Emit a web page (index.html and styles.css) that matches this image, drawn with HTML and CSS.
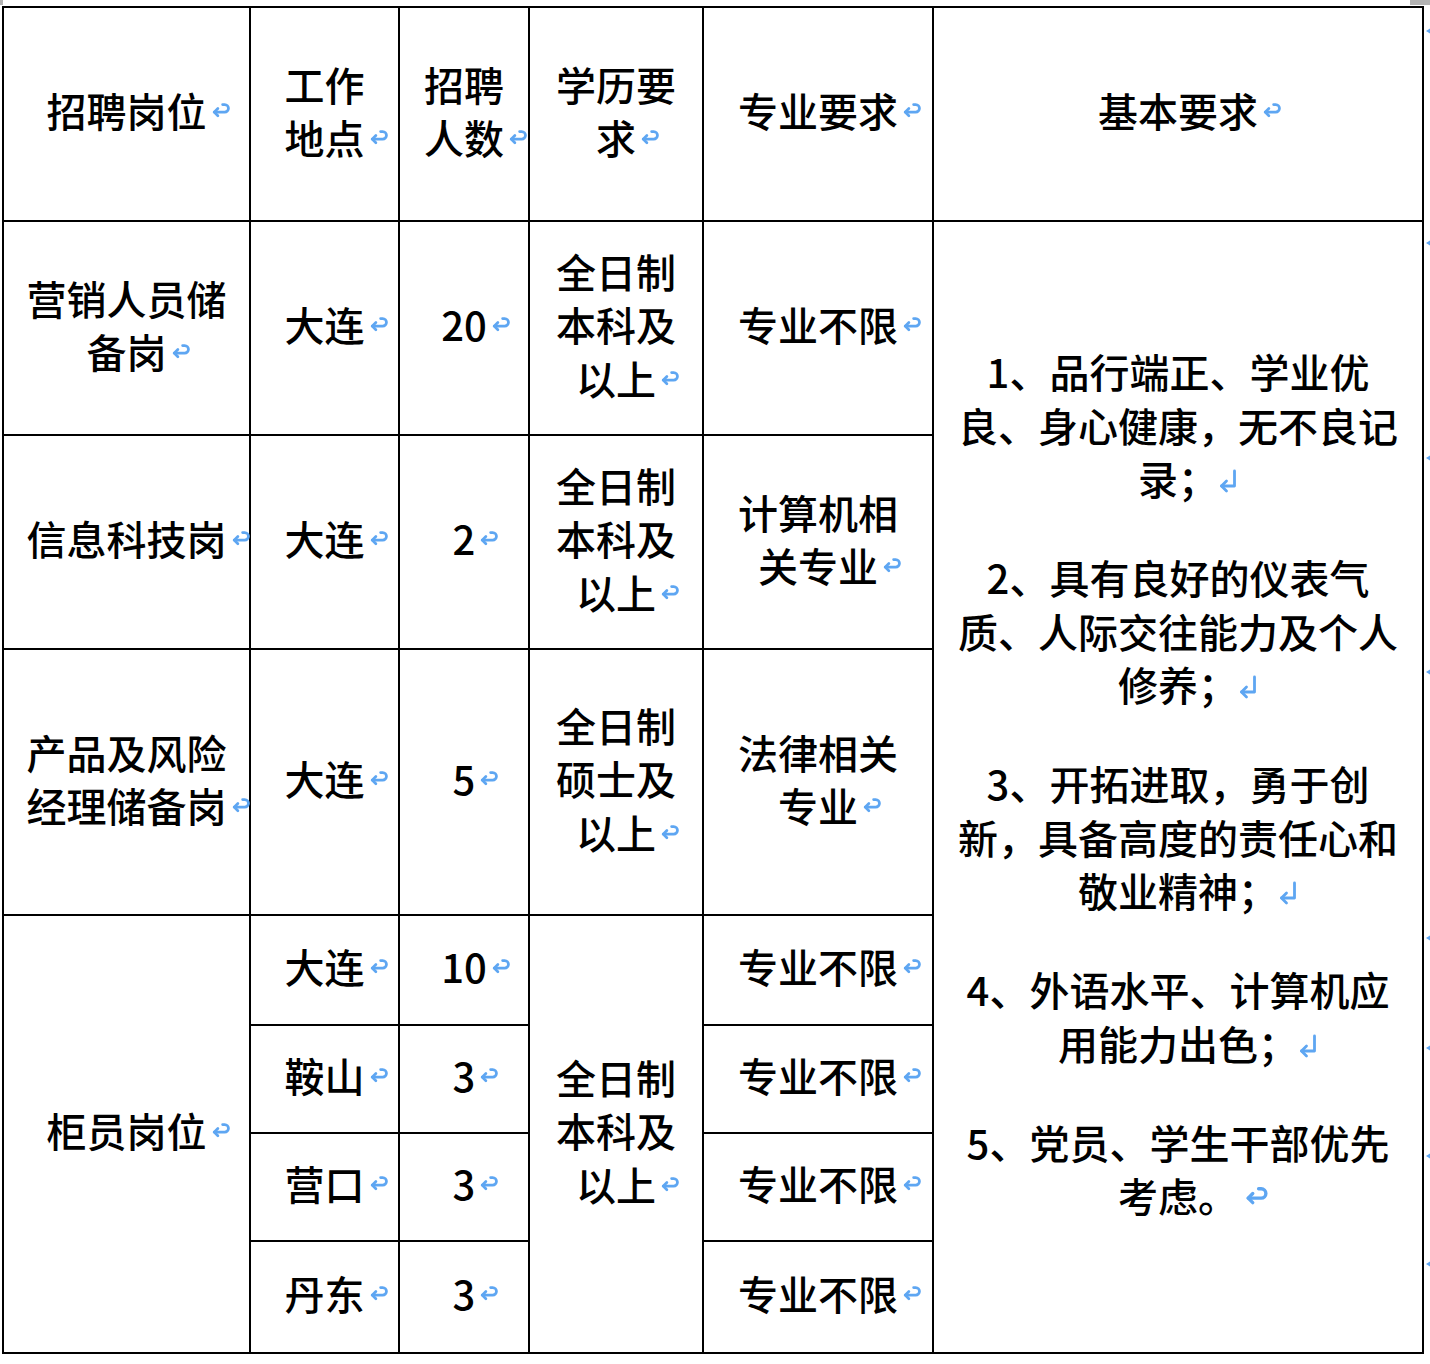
FILE: index.html
```html
<!DOCTYPE html>
<html lang="zh-CN">
<head>
<meta charset="utf-8">
<title>招聘岗位</title>
<link rel="stylesheet" href="styles.css">
</head>
<body>
<div class="page">
  <span class="corner corner-left"></span>
  <span class="corner corner-right"></span>

  <table class="jobs">
    <colgroup>
      <col class="c1"><col class="c2"><col class="c3"><col class="c4"><col class="c5"><col class="c6">
    </colgroup>
    <tr class="r-head">
      <td>招聘岗位<span class="pm"><svg class="ret" viewBox="0 0 20 13"><path d="M4 8.5H14a3.6 3.6 0 0 0 0-7.2h-2"/><path d="M7.5 5L4 8.5 7.5 12"/></svg></span></td>
      <td>工作地点<span class="pm"><svg class="ret" viewBox="0 0 20 13"><path d="M4 8.5H14a3.6 3.6 0 0 0 0-7.2h-2"/><path d="M7.5 5L4 8.5 7.5 12"/></svg></span></td>
      <td>招聘人数<span class="pm"><svg class="ret" viewBox="0 0 20 13"><path d="M4 8.5H14a3.6 3.6 0 0 0 0-7.2h-2"/><path d="M7.5 5L4 8.5 7.5 12"/></svg></span></td>
      <td>学历要求<span class="pm"><svg class="ret" viewBox="0 0 20 13"><path d="M4 8.5H14a3.6 3.6 0 0 0 0-7.2h-2"/><path d="M7.5 5L4 8.5 7.5 12"/></svg></span></td>
      <td>专业要求<span class="pm"><svg class="ret" viewBox="0 0 20 13"><path d="M4 8.5H14a3.6 3.6 0 0 0 0-7.2h-2"/><path d="M7.5 5L4 8.5 7.5 12"/></svg></span></td>
      <td>基本要求<span class="pm"><svg class="ret" viewBox="0 0 20 13"><path d="M4 8.5H14a3.6 3.6 0 0 0 0-7.2h-2"/><path d="M7.5 5L4 8.5 7.5 12"/></svg></span></td>
    </tr>
    <tr class="r-a">
      <td>营销人员储备岗<span class="pm"><svg class="ret" viewBox="0 0 20 13"><path d="M4 8.5H14a3.6 3.6 0 0 0 0-7.2h-2"/><path d="M7.5 5L4 8.5 7.5 12"/></svg></span></td>
      <td>大连<span class="pm"><svg class="ret" viewBox="0 0 20 13"><path d="M4 8.5H14a3.6 3.6 0 0 0 0-7.2h-2"/><path d="M7.5 5L4 8.5 7.5 12"/></svg></span></td>
      <td>20<span class="pm"><svg class="ret" viewBox="0 0 20 13"><path d="M4 8.5H14a3.6 3.6 0 0 0 0-7.2h-2"/><path d="M7.5 5L4 8.5 7.5 12"/></svg></span></td>
      <td>全日制本科及以上<span class="pm"><svg class="ret" viewBox="0 0 20 13"><path d="M4 8.5H14a3.6 3.6 0 0 0 0-7.2h-2"/><path d="M7.5 5L4 8.5 7.5 12"/></svg></span></td>
      <td>专业不限<span class="pm"><svg class="ret" viewBox="0 0 20 13"><path d="M4 8.5H14a3.6 3.6 0 0 0 0-7.2h-2"/><path d="M7.5 5L4 8.5 7.5 12"/></svg></span></td>
      <td rowspan="7" class="basic">
        <p>1、品行端正、学业优良、身心健康，无不良记录；<span class="pm"><svg class="nl" viewBox="0 0 20 24"><path d="M16.5 2V17H3.5"/><path d="M8.5 12L3.5 17 8.5 22"/></svg></span></p>
        <p>2、具有良好的仪表气质、人际交往能力及个人修养；<span class="pm"><svg class="nl" viewBox="0 0 20 24"><path d="M16.5 2V17H3.5"/><path d="M8.5 12L3.5 17 8.5 22"/></svg></span></p>
        <p>3、开拓进取，勇于创新，具备高度的责任心和敬业精神；<span class="pm"><svg class="nl" viewBox="0 0 20 24"><path d="M16.5 2V17H3.5"/><path d="M8.5 12L3.5 17 8.5 22"/></svg></span></p>
        <p>4、外语水平、计算机应用能力出色；<span class="pm"><svg class="nl" viewBox="0 0 20 24"><path d="M16.5 2V17H3.5"/><path d="M8.5 12L3.5 17 8.5 22"/></svg></span></p>
        <p>5、党员、学生干部优先考虑。<span class="pm"><svg class="ret ret-lg" viewBox="0 0 20 13"><path d="M4 8.5H14a3.6 3.6 0 0 0 0-7.2h-2"/><path d="M7.5 5L4 8.5 7.5 12"/></svg></span></p>
      </td>
    </tr>
    <tr class="r-b">
      <td>信息科技岗<span class="pm"><svg class="ret" viewBox="0 0 20 13"><path d="M4 8.5H14a3.6 3.6 0 0 0 0-7.2h-2"/><path d="M7.5 5L4 8.5 7.5 12"/></svg></span></td>
      <td>大连<span class="pm"><svg class="ret" viewBox="0 0 20 13"><path d="M4 8.5H14a3.6 3.6 0 0 0 0-7.2h-2"/><path d="M7.5 5L4 8.5 7.5 12"/></svg></span></td>
      <td>2<span class="pm"><svg class="ret" viewBox="0 0 20 13"><path d="M4 8.5H14a3.6 3.6 0 0 0 0-7.2h-2"/><path d="M7.5 5L4 8.5 7.5 12"/></svg></span></td>
      <td>全日制本科及以上<span class="pm"><svg class="ret" viewBox="0 0 20 13"><path d="M4 8.5H14a3.6 3.6 0 0 0 0-7.2h-2"/><path d="M7.5 5L4 8.5 7.5 12"/></svg></span></td>
      <td>计算机相关专业<span class="pm"><svg class="ret" viewBox="0 0 20 13"><path d="M4 8.5H14a3.6 3.6 0 0 0 0-7.2h-2"/><path d="M7.5 5L4 8.5 7.5 12"/></svg></span></td>
    </tr>
    <tr class="r-c">
      <td>产品及风险经理储备岗<span class="pm"><svg class="ret" viewBox="0 0 20 13"><path d="M4 8.5H14a3.6 3.6 0 0 0 0-7.2h-2"/><path d="M7.5 5L4 8.5 7.5 12"/></svg></span></td>
      <td>大连<span class="pm"><svg class="ret" viewBox="0 0 20 13"><path d="M4 8.5H14a3.6 3.6 0 0 0 0-7.2h-2"/><path d="M7.5 5L4 8.5 7.5 12"/></svg></span></td>
      <td>5<span class="pm"><svg class="ret" viewBox="0 0 20 13"><path d="M4 8.5H14a3.6 3.6 0 0 0 0-7.2h-2"/><path d="M7.5 5L4 8.5 7.5 12"/></svg></span></td>
      <td>全日制硕士及以上<span class="pm"><svg class="ret" viewBox="0 0 20 13"><path d="M4 8.5H14a3.6 3.6 0 0 0 0-7.2h-2"/><path d="M7.5 5L4 8.5 7.5 12"/></svg></span></td>
      <td>法律相关专业<span class="pm"><svg class="ret" viewBox="0 0 20 13"><path d="M4 8.5H14a3.6 3.6 0 0 0 0-7.2h-2"/><path d="M7.5 5L4 8.5 7.5 12"/></svg></span></td>
    </tr>
    <tr class="r-d">
      <td rowspan="4">柜员岗位<span class="pm"><svg class="ret" viewBox="0 0 20 13"><path d="M4 8.5H14a3.6 3.6 0 0 0 0-7.2h-2"/><path d="M7.5 5L4 8.5 7.5 12"/></svg></span></td>
      <td>大连<span class="pm"><svg class="ret" viewBox="0 0 20 13"><path d="M4 8.5H14a3.6 3.6 0 0 0 0-7.2h-2"/><path d="M7.5 5L4 8.5 7.5 12"/></svg></span></td>
      <td>10<span class="pm"><svg class="ret" viewBox="0 0 20 13"><path d="M4 8.5H14a3.6 3.6 0 0 0 0-7.2h-2"/><path d="M7.5 5L4 8.5 7.5 12"/></svg></span></td>
      <td rowspan="4">全日制本科及以上<span class="pm"><svg class="ret" viewBox="0 0 20 13"><path d="M4 8.5H14a3.6 3.6 0 0 0 0-7.2h-2"/><path d="M7.5 5L4 8.5 7.5 12"/></svg></span></td>
      <td>专业不限<span class="pm"><svg class="ret" viewBox="0 0 20 13"><path d="M4 8.5H14a3.6 3.6 0 0 0 0-7.2h-2"/><path d="M7.5 5L4 8.5 7.5 12"/></svg></span></td>
    </tr>
    <tr class="r-e">
      <td>鞍山<span class="pm"><svg class="ret" viewBox="0 0 20 13"><path d="M4 8.5H14a3.6 3.6 0 0 0 0-7.2h-2"/><path d="M7.5 5L4 8.5 7.5 12"/></svg></span></td>
      <td>3<span class="pm"><svg class="ret" viewBox="0 0 20 13"><path d="M4 8.5H14a3.6 3.6 0 0 0 0-7.2h-2"/><path d="M7.5 5L4 8.5 7.5 12"/></svg></span></td>
      <td>专业不限<span class="pm"><svg class="ret" viewBox="0 0 20 13"><path d="M4 8.5H14a3.6 3.6 0 0 0 0-7.2h-2"/><path d="M7.5 5L4 8.5 7.5 12"/></svg></span></td>
    </tr>
    <tr class="r-f">
      <td>营口<span class="pm"><svg class="ret" viewBox="0 0 20 13"><path d="M4 8.5H14a3.6 3.6 0 0 0 0-7.2h-2"/><path d="M7.5 5L4 8.5 7.5 12"/></svg></span></td>
      <td>3<span class="pm"><svg class="ret" viewBox="0 0 20 13"><path d="M4 8.5H14a3.6 3.6 0 0 0 0-7.2h-2"/><path d="M7.5 5L4 8.5 7.5 12"/></svg></span></td>
      <td>专业不限<span class="pm"><svg class="ret" viewBox="0 0 20 13"><path d="M4 8.5H14a3.6 3.6 0 0 0 0-7.2h-2"/><path d="M7.5 5L4 8.5 7.5 12"/></svg></span></td>
    </tr>
    <tr class="r-g">
      <td>丹东<span class="pm"><svg class="ret" viewBox="0 0 20 13"><path d="M4 8.5H14a3.6 3.6 0 0 0 0-7.2h-2"/><path d="M7.5 5L4 8.5 7.5 12"/></svg></span></td>
      <td>3<span class="pm"><svg class="ret" viewBox="0 0 20 13"><path d="M4 8.5H14a3.6 3.6 0 0 0 0-7.2h-2"/><path d="M7.5 5L4 8.5 7.5 12"/></svg></span></td>
      <td>专业不限<span class="pm"><svg class="ret" viewBox="0 0 20 13"><path d="M4 8.5H14a3.6 3.6 0 0 0 0-7.2h-2"/><path d="M7.5 5L4 8.5 7.5 12"/></svg></span></td>
    </tr>
  </table>

  <span class="row-end m1"></span>
  <span class="row-end m2"></span>
  <span class="row-end m3"></span>
  <span class="row-end m4"></span>
  <span class="row-end m5"></span>
  <span class="row-end m6"></span>
  <span class="row-end m7"></span>
  <span class="row-end m8"></span>
</div>
</body>
</html>
```

FILE: styles.css
```css
html, body {
  margin: 0;
  padding: 0;
  background: #ffffff;
}

body {
  font-family: "Noto Sans CJK SC", "Noto Sans", sans-serif;
  color: #000000;
}

.page {
  position: relative;
  width: 1430px;
  height: 1364px;
  overflow: hidden;
}

.jobs {
  border-collapse: separate;
  border-spacing: 0;
  table-layout: fixed;
  width: 1422px;
  margin: 6px 0 0 2px;
  border-top: 2px solid #000;
  border-left: 2px solid #000;
}

.c1 { width: 247px; }
.c2 { width: 149px; }
.c3 { width: 130px; }
.c4 { width: 174px; }
.c5 { width: 230px; }
.c6 { width: 490px; }

.jobs td {
  box-sizing: border-box;
  border-right: 2px solid #000;
  border-bottom: 2px solid #000;
  padding: 0 18px 6px;
  text-align: center;
  vertical-align: middle;
  font-size: 40px;
  font-weight: 500;
  line-height: 53.5px;
  line-break: strict;
}

.r-head { height: 214px; }
.r-a { height: 214px; }
.r-b { height: 214px; }
.r-c { height: 266px; }
.r-d { height: 110px; }
.r-e { height: 108px; }
.r-f { height: 108px; }
.r-g { height: 112px; }

.basic p {
  margin: 0;
}

.basic p + p {
  margin-top: 45.5px;
}

/* Word-style paragraph marks: take no layout width */
.pm {
  display: inline-block;
  position: relative;
  width: 0;
  height: 0;
}

.pm svg {
  position: absolute;
  fill: none;
  stroke: #5ea6f2;
  stroke-width: 2.6;
  stroke-linecap: round;
  stroke-linejoin: round;
  overflow: visible;
}

.pm .ret {
  left: 3px;
  bottom: 10px;
  width: 21px;
  height: 14px;
}

.pm .ret-lg {
  left: 5px;
  bottom: 8px;
  width: 26px;
  height: 17px;
}

.pm .nl {
  left: 0;
  bottom: 2px;
  width: 20px;
  height: 24px;
  stroke-width: 2.8;
}

/* page corner marks */
.corner {
  position: absolute;
  top: 0;
  height: 5px;
  background: #b3b3b3;
}

.corner-left {
  left: 0;
  width: 3px;
}

.corner-right {
  left: 1410px;
  width: 20px;
}

/* end-of-row marks, clipped at the page edge */
.row-end {
  position: absolute;
  left: 1426px;
  width: 0;
  height: 0;
  border-top: 3px solid transparent;
  border-bottom: 3px solid transparent;
  border-right: 5px solid #5ea6f2;
}

.m1 { top: 28px; }
.m2 { top: 240px; }
.m3 { top: 455px; }
.m4 { top: 669px; }
.m5 { top: 935px; }
.m6 { top: 1045px; }
.m7 { top: 1153px; }
.m8 { top: 1261px; }
```
